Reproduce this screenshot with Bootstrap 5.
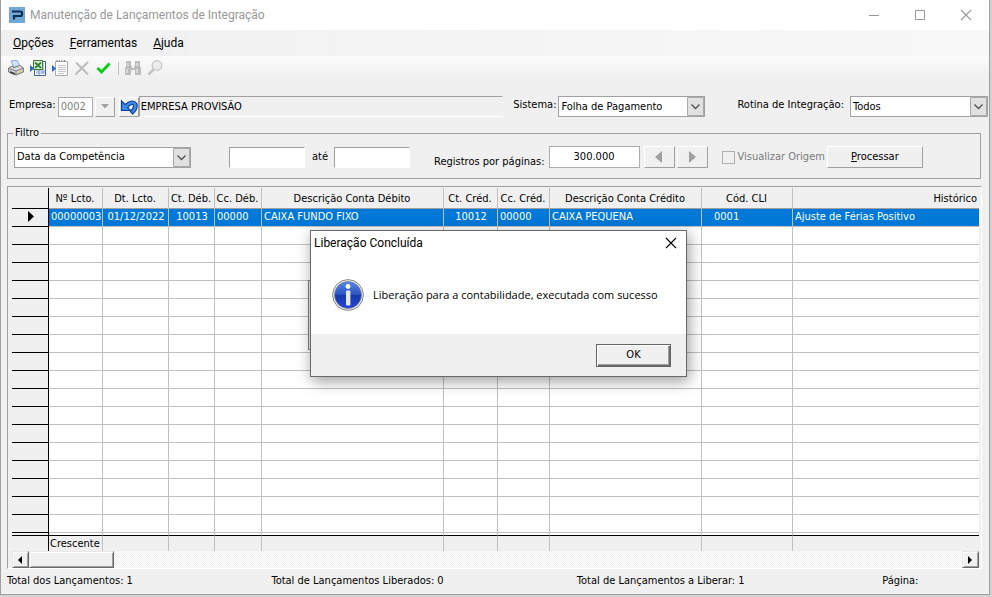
<!DOCTYPE html>
<html lang="pt-BR">
<head>
<meta charset="utf-8">
<meta name="viewport" content="width=device-width, initial-scale=1">
<title>Manutenção de Lançamentos de Integração</title>
<link rel="stylesheet" href="https://cdn.jsdelivr.net/npm/bootstrap@5.3.0/dist/css/bootstrap.min.css">
<style>
body { background: #d2d2d2; color: #000; font: 11px/14px "DejaVu Sans Condensed", "Noto Sans", sans-serif; }
button, input, select { font: inherit; color: inherit; border-radius: 0; }
.ui-font { font-family: Roboto, "Noto Sans", sans-serif; font-size: 12px; }
.msg-font { font-family: "Open Sans", "Noto Sans", sans-serif; }
.app-window { background: #f0f0f0; border: 1px solid #a0a0a0; border-top: 0; margin: 0 2px 2px 0; }
.title-bar { height: 30px; color: #999; padding: 0 17px 0 8px; gap: 5px; }
.win-group { gap: 34px; }
.win-btn { border: 0; background: none; padding: 0; width: 12px; height: 12px; display: flex; }
.menu-bar { height: 26px; background: linear-gradient(90deg, #f0f0f0, #f8f8f8); padding: 0 12px; gap: 16px; }
.menu-bar a { color: #000; text-decoration: none; }
.tool-bar { height: 29px; background: linear-gradient(#fbfbfb, #f0f0f0 75%); padding: 0 7px 5px; gap: 6px; }
.tool-bar button { border: 0; background: none; padding: 0; width: 16px; height: 16px; display: flex; }
.tool-sep { width: 1px; height: 13px; background: #c0c0c0; }
.company-row { padding: 11px 1px 0 8px; }
.company-row label { padding-bottom: 3px; margin-right: 2px; }
.company-row .lbl-sys { margin-left: 10px; }
.company-row .lbl-rot { margin-left: 32px; margin-right: 6px; }
.code-box { width: 35px; height: 20px; border: 1px solid #acacac; background: #fff; color: #808080; padding: 0 2px; margin-right: 2px; }
.raised { background: #f0f0f0; border: 1px solid; border-color: #fff #a0a0a0 #a0a0a0 #fff; padding: 0; display: flex; align-items: center; justify-content: center; }
.sq-btn { width: 20px; height: 20px; }
.name-box { height: 21px; min-width: 0; border: 1px solid; border-color: #a0a0a0 #f0f0f0 #fff #a0a0a0; background: #f0f0f0; padding: 0 1px; }
.combo { appearance: none; height: 21px; border: 1px solid #a0a0a5; padding: 0 20px 0 2px; background: #fff url("data:image/svg+xml,%3Csvg xmlns='http://www.w3.org/2000/svg' width='17' height='19'%3E%3Cpath d='M.5 .5h16v18H.5z' fill='%23e1e1e1' stroke='%23a9a9a9'/%3E%3Cpath d='M4.500 7.500l4 4 4-4' fill='none' stroke='%23505050' stroke-width='1.300'/%3E%3C/svg%3E") right center no-repeat; }
.combo-sys { width: 147px; }
.combo-rot { width: 138px; }
.combo-date { width: 177px; margin: 0 38px 0 1px; }
.filter-box { border: 1px solid #a0a0a0; margin: 9px 8px 0 6px; height: 53px; padding: 0 5px; min-width: 0; }
.filter-box legend { float: none; width: auto; font-size: 11px; line-height: 14px; padding: 0 2px; margin: 0; }
.filter-row { padding-top: 5px; }
.lbl-ate { margin: 0 6px 0 7px; }
.lbl-reg { padding-top: 10px; }
.lbl-vis { color: #7a7a7a; margin: 0 2px 0 3px; }
.sunken { width: 76px; height: 21px; background: #fff; border: 1px solid; border-color: #a0a0a0 #fff #fff #a0a0a0; }
.num-box { width: 91px; height: 22px; background: #fff; border: 1px solid #acacac; text-align: center; padding: 0 0 2px; }
.nav-btn { width: 31px; height: 22px; margin-right: 2px; }
.proc-btn { width: 96px; height: 22px; }
.tick { appearance: none; width: 13px; height: 13px; margin: 0 0 0 12px; border: 1px solid #b0b0b0; background: #f0f0f0; }
.grid-frame { margin: 7px 7px 0 6px; border: 1px solid; border-color: #a0a0a0 #fff #fff #a0a0a0; padding: 1px 2px 0 4px; }
.ledger { width: 100%; table-layout: fixed; border-collapse: separate; border-spacing: 0; background: #fff; }
.ledger th, .ledger td { height: 18px; line-height: 14px; padding: 0 1px 2px 2px; white-space: nowrap; overflow: hidden; font-weight: 400; border-right: 1px solid #c0c0c0; border-bottom: 1px solid #c0c0c0; }
.ledger thead th { height: 21px; background: #f0f0f0; text-align: center; padding: 2px 1px 0 0; border-bottom-color: #a0a0a0; }
.ledger tr > :first-child { background: #f0f0f0; border-right-color: #000; border-bottom-color: #000; text-align: center; }
.ledger tr > :last-child { border-right: 0; }
.ledger thead th:last-child { text-align: right; padding-right: 2px; }
.ledger .picked td { background: #0078d7; color: #fff; }
.ledger .picked .cli { padding-left: 12px; }
.ledger tfoot td { background: #f0f0f0; border-bottom: 0; border-top: 1px solid #000; height: 16px; padding: 0 1px; }
.ledger .foot-gap td { background: #fff; border: 0; height: 2px; line-height: 1px; padding: 0; border-right: 1px solid #c0c0c0; }
.ledger .foot-gap td:first-child { background: #f0f0f0; border-right: 1px solid #000; }
.ledger .foot-gap td:last-child { border-right: 0; }
.ledger svg { display: block; margin: 0 auto; }
.c-sel { width: 37px; } .c-num { width: 54px; } .c-dt { width: 66px; } .c-ctd { width: 46px; } .c-ccd { width: 47px; }
.c-dd { width: 182px; } .c-ctc { width: 54px; } .c-ccc { width: 52px; } .c-dc { width: 152px; } .c-cli { width: 91px; }
.h-scroll { height: 17px; background: repeating-conic-gradient(#f0f0f0 0 25%, #fff 0 50%) 0 0 / 2px 2px; }
.h-scroll button { width: 17px; border: 1px solid; border-color: #e8e8e8 #696969 #696969 #e8e8e8; box-shadow: inset 1px 1px #fff, inset -1px -1px #a0a0a0; background: #f0f0f0; padding: 0 2px 0 0; display: flex; align-items: center; justify-content: center; }
.h-scroll .thumb { width: 85px; }
.status-bar { display: grid; grid-template-columns: 265fr 306fr 306fr 107fr; padding: 5px 0 6px 6px; }
.back-panel { position: absolute; left: 308px; top: 280px; width: 100px; height: 70px; border: 1px solid #808080; background: #f0f0f0; }
.msg-box { position: absolute; left: 310px; top: 230px; width: 377px; background: #fff; border: 1px solid #696969; box-shadow: 2px 4px 14px rgba(0,0,0,.4); }
.msg-head { height: 24px; padding: 0 9px 0 3px; }
.msg-body { height: 79px; padding: 0 20px 0 21px; gap: 9px; }
.msg-foot { background: #f0f0f0; height: 42px; padding-right: 15px; }
.ok-btn { width: 75px; height: 23px; background: #f0f0f0; border: 1px solid #646464; box-shadow: inset 1px 1px #fff, inset -1px -1px #696969, inset -2px -2px #a0a0a0; padding: 0; }
</style>
<script src="https://cdn.jsdelivr.net/npm/bootstrap@5.3.0/dist/js/bootstrap.bundle.min.js"></script>
</head>
<body>
<main class="app-window">
  <header class="title-bar ui-font bg-white d-flex align-items-center">
    <svg width="16" height="16" viewBox="0 0 16 16"><path fill="#6fa8d6" d="M0 0h16v16H0z"/><path d="M3 4.500h8.500q1.500 0 1.500 1.500v1.500q0 1.500-1.500 1.500H5v3.500" fill="none" stroke="#0d2c54" stroke-width="2.200"/></svg>
    <span class="flex-grow-1">Manutenção de Lançamentos de Integração</span>
    <div class="win-group d-flex align-items-center">
      <button class="win-btn" aria-label="Minimizar"><svg width="12" height="12"><path d="M1 6.500h10" stroke="#999"/></svg></button>
      <button class="win-btn" aria-label="Maximizar"><svg width="12" height="12"><path d="M1.500 1.500h9v9h-9z" fill="none" stroke="#999"/></svg></button>
      <button class="win-btn" aria-label="Fechar"><svg width="12" height="12"><path d="M1 1l10 10M11 1L1 11" stroke="#999" stroke-width="1.100"/></svg></button>
    </div>
  </header>
  <nav class="menu-bar ui-font d-flex align-items-center">
    <a href="#"><u>O</u>pções</a><a href="#"><u>F</u>erramentas</a><a href="#"><u>A</u>juda</a>
  </nav>
  <div class="tool-bar d-flex align-items-center">
    <button aria-label="Imprimir"><svg width="16" height="16" viewBox="0 0 16 16"><path d="M3 1l6-1 3 6-6 2z" fill="#cfe0fb" stroke="#7c9bd6" stroke-width=".8"/><path d="M.6 8l4-2 1 1.500 6-2 3.800 2.500v4L8 15 .6 12z" fill="#d4d6da" stroke="#666" stroke-width=".9"/><path d="M.6 8.500L8 11l7.400-2.800M8 11v4" stroke="#777" stroke-width=".9" fill="none"/><path d="M2 11l5 2v2l-5-2z" fill="#444"/><path d="M10 12.500l4-1.500" stroke="#e8c94a"/></svg></button>
    <button aria-label="Exportar para Excel"><svg width="16" height="16" viewBox="0 0 16 16"><path d="M4.500 1.500h11v14h-11z" fill="#fff" stroke="#3f5f9e"/><path d="M13 3v11M6 11h9M6 13h9M9 10v5" stroke="#7f9dca"/><path d="M3.500 .5h9v9h-9z" fill="#e4f0df" stroke="#3c7a35"/><path d="M5 2.500l6 5.500M11 2.500L5 8" stroke="#2f8a2f" stroke-width="2"/><path d="M0 5l4 3.500L0 12z" fill="#2667cc"/></svg></button>
    <button aria-label="Exportar para texto"><svg width="16" height="16" viewBox="0 0 16 16"><path d="M3.500 1.500h12v14h-12z" fill="#fdfdfd" stroke="#aaa"/><path d="M5 0v2M7.500 0v2M10 0v2M12.500 0v2" stroke="#888"/><path d="M6 5.500h8M6 7.500h8M6 9.500h8M6 11.500h8M6 13.500h6" stroke="#c8c8c8"/><path d="M0 5l4 3.500L0 12z" fill="#2667cc"/></svg></button>
    <button aria-label="Excluir"><svg width="16" height="16" viewBox="0 0 16 16"><path d="M2 2.500l12 12M14 2L1.500 14.500" stroke="#bbb" stroke-width="1.900"/></svg></button>
    <button aria-label="Confirmar"><svg width="16" height="16" viewBox="0 0 16 16"><path d="M1.500 8L5.500 12 13.500 3.500" fill="none" stroke="#07cc14" stroke-width="2.800"/></svg></button>
    <span class="tool-sep"></span>
    <button aria-label="Localizar"><svg width="16" height="16" viewBox="0 0 16 16"><path d="M1 1h5v5h1v2h2V6h1V1h5v6h1v8h-6v-5H6v5H0V7h1z" fill="#bcbcbc"/><path d="M1 9h2v4H1zM11 9h2v4h-2zM2 3h2v3H2zM11 3h2v3h-2z" fill="#d9d9d9"/></svg></button>
    <button aria-label="Pesquisar"><svg width="16" height="16" viewBox="0 0 16 16"><circle cx="10" cy="5.500" r="4.800" fill="#ececec" stroke="#c8c8c8" stroke-width="1.300"/><path d="M6.500 9.500l-5 5" stroke="#c4c4c4" stroke-width="2.600"/></svg></button>
  </div>

  <section class="company-row d-flex align-items-center">
    <label for="emp">Empresa:</label>
    <input id="emp" class="code-box" value="0002">
    <button class="raised sq-btn" aria-label="Escolher empresa"><svg width="8" height="5"><path d="M0 0h8L4 4.500z" fill="#a0a0a0"/></svg></button>
    <button class="raised sq-btn ms-1" aria-label="Voltar"><svg width="18" height="16" viewBox="0 0 18 16"><path d="M1.500 2v9.500h9L7.700 8.700Q10.500 4.500 13 5.500q1.800 3-2.500 7l2 2.500q6-5 4.300-10.500Q13-1 5 5.500z" fill="#3d8be8" stroke="#0b3f9c" stroke-width="1.200"/></svg></button>
    <input class="name-box flex-grow-1" aria-label="Nome da empresa" value="EMPRESA PROVISÃO" readonly>
    <label for="sis" class="lbl-sys">Sistema:</label>
    <select id="sis" class="combo combo-sys"><option>Folha de Pagamento</option></select>
    <label for="rot" class="lbl-rot">Rotina de Integração:</label>
    <select id="rot" class="combo combo-rot"><option>Todos</option></select>
  </section>

  <fieldset class="filter-box">
    <legend>Filtro</legend>
    <div class="filter-row d-flex align-items-center">
      <select class="combo combo-date" aria-label="Campo do filtro"><option>Data da Competência</option></select>
      <input id="de" class="sunken" aria-label="De">
      <label for="ate" class="lbl-ate">até</label>
      <input id="ate" class="sunken">
      <label for="reg" class="lbl-reg ms-4 me-1">Registros por páginas:</label>
      <input id="reg" class="num-box" value="300.000">
      <button class="raised nav-btn ms-1" aria-label="Página anterior"><svg width="8" height="12"><path d="M7 0v12L0 6z" fill="#a0a0a0"/></svg></button>
      <button class="raised nav-btn" aria-label="Próxima página"><svg width="8" height="12"><path d="M1 0v12l7-6z" fill="#a0a0a0"/></svg></button>
      <input id="vis" type="checkbox" class="tick" disabled>
      <label for="vis" class="lbl-vis">Visualizar Origem</label>
      <button class="raised proc-btn"><span><u>P</u>rocessar</span></button>
    </div>
  </fieldset>

  <section class="grid-frame">
    <table class="ledger">
      <colgroup><col class="c-sel"><col class="c-num"><col class="c-dt"><col class="c-ctd"><col class="c-ccd"><col class="c-dd"><col class="c-ctc"><col class="c-ccc"><col class="c-dc"><col class="c-cli"><col></colgroup>
      <thead><tr><th></th><th>Nº Lcto.</th><th>Dt. Lcto.</th><th>Ct. Déb.</th><th>Cc. Déb.</th><th>Descrição Conta Débito</th><th>Ct. Créd.</th><th>Cc. Créd.</th><th>Descrição Conta Crédito</th><th>Cód. CLI</th><th>Histórico</th></tr></thead>
      <tbody id="rows">
        <tr class="picked"><th scope="row"><svg width="6" height="11"><path d="M0 0v11l6-5.500z"/></svg></th><td>00000003</td><td class="text-center">01/12/2022</td><td class="text-center">10013</td><td>00000</td><td>CAIXA FUNDO FIXO</td><td class="text-center">10012</td><td>00000</td><td>CAIXA PEQUENA</td><td class="cli">0001</td><td>Ajuste de Férias Positivo</td></tr>
      </tbody>
      <tfoot>
        <tr class="foot-gap"><td></td><td></td><td></td><td></td><td></td><td></td><td></td><td></td><td></td><td></td><td></td></tr>
        <tr><td></td><td>Crescente</td><td></td><td></td><td></td><td></td><td></td><td></td><td></td><td></td><td></td></tr>
      </tfoot>
    </table>
    <div class="h-scroll d-flex">
      <button aria-label="Rolar para a esquerda"><svg width="4" height="8"><path d="M4 0v8L0 4z"/></svg></button>
      <button class="thumb" aria-label="Barra de rolagem"></button>
      <button class="ms-auto" aria-label="Rolar para a direita"><svg width="4" height="8"><path d="M0 0v8l4-4z"/></svg></button>
    </div>
  </section>

  <footer class="status-bar">
    <span>Total dos Lançamentos: 1</span><span>Total de Lançamentos Liberados: 0</span><span>Total de Lançamentos a Liberar: 1</span><span>Página:</span>
  </footer>
</main>

<div class="back-panel"></div>
<div class="msg-box" role="dialog" aria-labelledby="msg-title">
  <div class="msg-head ui-font d-flex align-items-center justify-content-between">
    <span id="msg-title">Liberação Concluída</span>
    <button class="win-btn" aria-label="Fechar mensagem"><svg width="12" height="12"><path d="M1 1l10 10M11 1L1 11" stroke="#000" stroke-width="1.100"/></svg></button>
  </div>
  <div class="msg-body msg-font d-flex align-items-center">
    <svg class="flex-shrink-0" width="32" height="32" viewBox="0 0 32 32"><defs><linearGradient id="blue" x2="0" y2="1"><stop stop-color="#5b8be6"/><stop offset=".5" stop-color="#2850c0"/><stop offset=".51" stop-color="#1638a8"/><stop offset="1" stop-color="#2547dc"/></linearGradient></defs><circle cx="16" cy="16" r="15.400" fill="#eee" stroke="#888"/><circle cx="16" cy="16" r="13.500" fill="url(#blue)" stroke="#7a8296" stroke-width=".8"/><circle cx="16" cy="7.500" r="2.400" fill="#fff"/><rect x="14" y="11.500" width="4.400" height="15" rx="1" fill="#e8e8e8"/></svg>
    <span class="text-nowrap">Liberação para a contabilidade, executada com sucesso</span>
  </div>
  <div class="msg-foot d-flex align-items-center justify-content-end"><button class="ok-btn">OK</button></div>
</div>

<script>
  const rows = document.getElementById('rows');
  for (let i = 0; i < 17; i++) {
    const row = rows.insertRow();
    for (let c = 0; c < 11; c++) row.insertCell();
  }
</script>
</body>
</html>
